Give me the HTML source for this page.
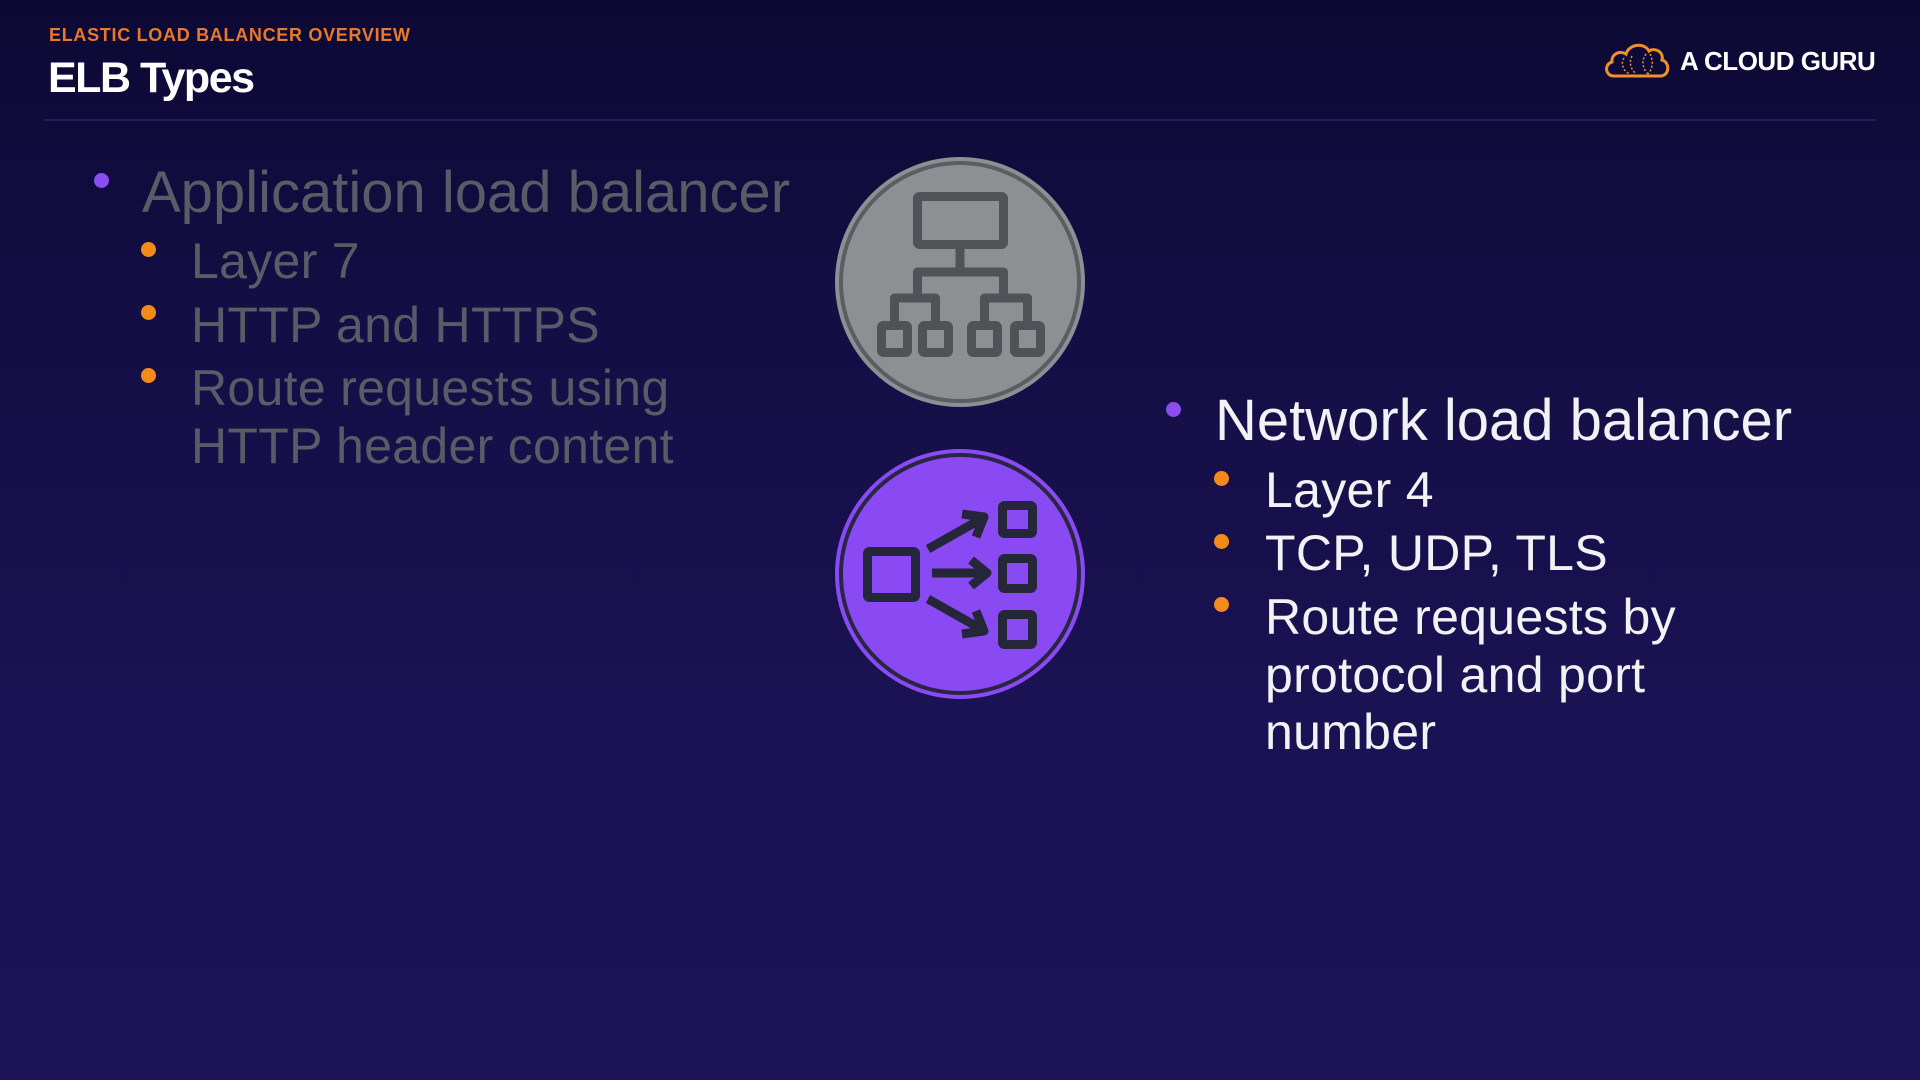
<!DOCTYPE html>
<html><head><meta charset="utf-8"><style>
html,body{margin:0;padding:0}
body{width:1920px;height:1080px;position:relative;overflow:hidden;background:linear-gradient(180deg,#0d0934 0%,#140e45 30%,#1a1252 65%,#1c1456 100%);font-family:"Liberation Sans",sans-serif}
.t{position:absolute;white-space:nowrap;line-height:1}
.g{color:#5a5b66}
.w{color:#f2f2f5}
.d{position:absolute;border-radius:50%}
.p{background:#8b4cf0;width:15px;height:15px}
.o{background:#f38a1c;width:15px;height:15px}
.m{font-size:58px;letter-spacing:0px}
.s{font-size:50px;letter-spacing:0.3px}
</style></head><body>
<div class="t" style="left:49px;top:26px;font-size:18px;font-weight:bold;color:#e8782e;letter-spacing:0.7px">ELASTIC LOAD BALANCER OVERVIEW</div>
<div class="t" style="left:48px;top:57px;font-size:43px;font-weight:bold;color:#fff;letter-spacing:-1.5px">ELB Types</div>
<div style="position:absolute;left:44px;top:119px;width:1832px;height:2px;background:#241f5a"></div>

<svg style="position:absolute;left:1602px;top:36px" width="70" height="44" viewBox="0 0 70 44">
<path d="M12 40 C3 40 2 28 10 26 C9 18 18 14 24 18 C27 8 42 6 47 15 C53 11 62 16 60 24 C68 26 68 40 58 40 Z" fill="none" stroke="#f0902a" stroke-width="3"/>
<path d="M22 22 C18 28 22 36 28 38 M30 20 C26 28 30 34 34 38 M44 18 C38 26 42 34 46 38 M48 18 C52 26 50 34 46 38" fill="none" stroke="#f0902a" stroke-width="1.5" stroke-dasharray="2 2"/>
</svg>
<div class="t" style="left:1680px;top:48px;font-size:26px;font-weight:bold;color:#fff;letter-spacing:-0.5px">A CLOUD GURU</div>

<div class="d p" style="left:94px;top:173px"></div>
<div class="t g m" style="left:142px;top:164px">Application load balancer</div>
<div class="d o" style="left:141px;top:242px"></div>
<div class="t g s" style="left:191px;top:236px">Layer 7</div>
<div class="d o" style="left:141px;top:305px"></div>
<div class="t g s" style="left:191px;top:300px">HTTP and HTTPS</div>
<div class="d o" style="left:141px;top:368px"></div>
<div class="t g s" style="left:191px;top:363px">Route requests using</div>
<div class="t g s" style="left:191px;top:421px">HTTP header content</div>

<div class="d p" style="left:1166px;top:402px"></div>
<div class="t w m" style="left:1215px;top:392px">Network load balancer</div>
<div class="d o" style="left:1214px;top:471px"></div>
<div class="t w s" style="left:1265px;top:465px">Layer 4</div>
<div class="d o" style="left:1214px;top:534px"></div>
<div class="t w s" style="left:1265px;top:528px">TCP, UDP, TLS</div>
<div class="d o" style="left:1214px;top:597px"></div>
<div class="t w s" style="left:1265px;top:592px">Route requests by</div>
<div class="t w s" style="left:1265px;top:650px">protocol and port</div>
<div class="t w s" style="left:1265px;top:707px">number</div>

<svg style="position:absolute;left:0;top:0" width="1920" height="1080">
<circle cx="960" cy="282" r="125" fill="#8d8f93"/>
<circle cx="960" cy="282" r="119" fill="none" stroke="#5b5d62" stroke-width="4"/>
<g fill="none" stroke="#505257" stroke-width="9" stroke-linejoin="round">
<rect x="917.5" y="196.5" width="86" height="48" rx="2"/>
<path d="M960 244 V272 M917.5 298 V272 H1003.5 V298 M894.5 325 V298 H935.5 V325 M984.5 325 V298 H1027.5 V325"/>
<rect x="881.5" y="325.5" width="26" height="27" rx="2"/>
<rect x="922.5" y="325.5" width="26" height="27" rx="2"/>
<rect x="971.5" y="325.5" width="26" height="27" rx="2"/>
<rect x="1014.5" y="325.5" width="26" height="27" rx="2"/>
</g>
<circle cx="960" cy="574" r="125" fill="#8a4af3"/>
<circle cx="960" cy="574" r="119" fill="none" stroke="#2b2545" stroke-width="4"/>
<g fill="none" stroke="#26263a" stroke-width="9" stroke-linejoin="round">
<rect x="867.5" y="551.5" width="48" height="46" rx="2"/>
<rect x="1002.5" y="505.5" width="30" height="28" rx="2"/>
<rect x="1002.5" y="558.5" width="30" height="30" rx="2"/>
<rect x="1002.5" y="614.5" width="30" height="30" rx="2"/>
<path d="M928 549 L983 518 M962 514 L984 517 L976 537"/>
<path d="M932 573 H986 M971 560 L987 573 L971 586"/>
<path d="M928 599 L983 630 M976 611 L984 631 L962 634"/>
</g>
</svg>
</body></html>
